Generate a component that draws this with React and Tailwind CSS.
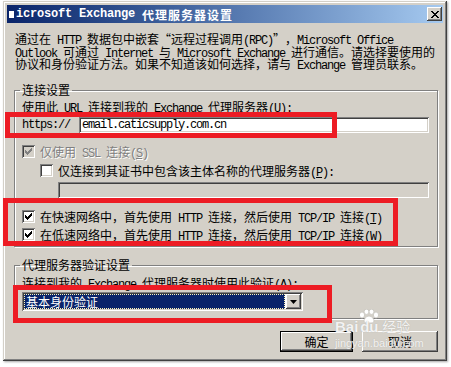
const M = ({ children, className = "", t = "tracking-[-1.2px]" }) => (
  <span className={`font-['Liberation_Mono',monospace] ${t} ${className}`}>{children}</span>
);

const sunken =
  "shadow-[inset_1px_1px_#808080,inset_-1px_-1px_#fff,inset_2px_2px_#404040,inset_-2px_-2px_#D4D0C8]";
const raised =
  "shadow-[inset_-1px_-1px_#404040,inset_1px_1px_#fff,inset_-2px_-2px_#808080,inset_2px_2px_#D4D0C8]";

const Check = ({ checked, disabled }) => (
  <span
    className={`flex h-[13px] w-[13px] shrink-0 items-center justify-center ${
      disabled ? "bg-[#D4D0C8]" : "bg-white"
    } ${sunken}`}
  >
    {checked && (
      <svg width="7" height="7" viewBox="0 0 7 7" shapeRendering="crispEdges" fill={disabled ? "#808080" : "#000"}>
        <rect x="6" y="0" width="1" height="1" />
        <rect x="5" y="1" width="2" height="1" />
        <rect x="0" y="2" width="1" height="1" />
        <rect x="4" y="2" width="3" height="1" />
        <rect x="0" y="3" width="2" height="1" />
        <rect x="3" y="3" width="3" height="1" />
        <rect x="0" y="4" width="5" height="1" />
        <rect x="1" y="5" width="3" height="1" />
        <rect x="2" y="6" width="1" height="1" />
      </svg>
    )}
  </span>
);

const Group = ({ title, children, className = "" }) => (
  <fieldset
    className={`ml-[7px] w-[424px] border border-[#808080] px-[7px] shadow-[inset_1px_1px_#fff,1px_1px_#fff] ${className}`}
  >
    <legend className="ml-[-2px] h-[14px] px-[2px] leading-[14px]">{title}</legend>
    {children}
  </fieldset>
);

const Paw = () => (
  <svg width="22" height="14" viewBox="0 0 22 14" fill="#fff" stroke="#c8c5bf" strokeWidth="0.8">
    <ellipse cx="4" cy="6" rx="2.6" ry="3" />
    <ellipse cx="8.5" cy="2.8" rx="2.4" ry="2.6" />
    <ellipse cx="13.5" cy="2.8" rx="2.4" ry="2.6" />
    <ellipse cx="18" cy="6" rx="2.6" ry="3" />
    <path d="M11 7c-3 0-5 3-5 5s2 2 5 2 5 0 5-2-2-5-5-5z" />
  </svg>
);

export default function App() {
  return (
    <div className="relative h-[367px] w-[451px] overflow-hidden bg-white pl-[3px] pt-[1px] font-['Noto_Sans_CJK_SC',sans-serif] text-[12px] leading-[13px] text-black">
      <div
        className={`relative flex h-[360px] w-[444px] flex-col bg-[#D4D0C8] p-[4px] shadow-[inset_-1px_-1px_#404040,inset_1px_1px_#D4D0C8,inset_-2px_-2px_#808080,inset_2px_2px_#fff,1px_1px_2px_rgba(0,0,0,0.35)]`}
      >
        {/* title bar */}
        <div className="flex h-[18px] shrink-0 items-center bg-linear-to-r from-[#0A246A] to-[#A6CAF0] pl-[2px] font-bold text-white">
          <span className="mr-[2px] inline-block h-[7px] w-[5px] shrink-0 overflow-hidden bg-white text-[1px] leading-[1px] text-white">
            M
          </span>
          <span className="inline-block w-[126px] shrink-0 whitespace-pre font-['Liberation_Mono',monospace] tracking-[-0.2px]">
            icrosoft Exchange
          </span>
          <span className="tracking-[1px]">代理服务器设置</span>
          <button className={`ml-auto mr-[1px] flex h-[14px] w-[15px] items-center justify-center bg-[#D4D0C8] ${raised}`}>
            <svg width="8" height="7" viewBox="0 0 8 7" shapeRendering="crispEdges" fill="#000">
              <rect x="0" y="0" width="2" height="1" />
              <rect x="6" y="0" width="2" height="1" />
              <rect x="1" y="1" width="2" height="1" />
              <rect x="5" y="1" width="2" height="1" />
              <rect x="2" y="2" width="4" height="1" />
              <rect x="3" y="3" width="2" height="1" />
              <rect x="2" y="4" width="4" height="1" />
              <rect x="1" y="5" width="2" height="1" />
              <rect x="5" y="5" width="2" height="1" />
              <rect x="0" y="6" width="2" height="1" />
              <rect x="6" y="6" width="2" height="1" />
            </svg>
          </button>
        </div>

        {/* description */}
        <div className="mt-[10px] h-[37px] whitespace-nowrap pl-[8px] leading-[12px]">
          <div className="h-[12.5px]">
            通过在<M> HTTP </M>数据包中嵌套<span className="inline-block w-[12px] text-right">“</span>远程过程调用<M>(RPC)</M>
            <span className="inline-block w-[12px] text-left">”</span>，<M>Microsoft Office</M>
          </div>
          <div className="h-[12.5px]">
            <M>Outlook </M>可通过<M> Internet </M>与<M> Microsoft Exchange </M>进行通信。请选择要使用的
          </div>
          <div className="h-[12px]">
            协议和身份验证方法。如果不知道该如何选择，请与<M> Exchange </M>管理员联系。
          </div>
        </div>

        {/* connection settings */}
        <Group title="连接设置" className="mt-[13px] pb-[5px]">
          <div className="mt-[3px] h-[13px] whitespace-nowrap">
            使用此<M> URL </M>连接到我的<M> Exchange </M>代理服务器<M>(<span className="underline">U</span>):</M>
          </div>
          <div className="mt-[4px] flex h-[16px] items-center">
            <M className="w-[57px]">https://</M>
            <div className={`flex h-[16px] w-[350px] items-center bg-white pl-[3px] ${sunken}`}>
              <M>email.caticsupply.com.cn</M>
            </div>
          </div>
          <div className="mt-[12px] flex h-[13px] items-center gap-[5px] text-[#808080] [text-shadow:1px_1px_0_#fff]">
            <Check checked disabled />
            <span className="h-[13px]">
              仅使用<M> SSL </M>连接<M>(<span className="underline">S</span>)</M>
            </span>
          </div>
          <div className="mt-[6px] flex h-[13px] items-center gap-[5px] pl-[18px]">
            <Check />
            <span className="h-[13px] whitespace-nowrap">
              仅连接到其证书中包含该主体名称的代理服务器<M>(<span className="underline">P</span>):</M>
            </span>
          </div>
          <div className={`ml-[36px] mt-[5px] h-[16px] w-[371px] bg-[#D4D0C8] ${sunken}`} />
          <div className="mt-[12px] flex h-[13px] items-center gap-[5px]">
            <Check checked />
            <span className="h-[13px] whitespace-nowrap">
              在快速网络中，首先使用<M> HTTP </M>连接，然后使用<M> TCP/IP </M>连接<M>(<span className="underline">T</span>)</M>
            </span>
          </div>
          <div className="mt-[5px] flex h-[13px] items-center gap-[5px]">
            <Check checked />
            <span className="h-[13px] whitespace-nowrap">
              在低速网络中，首先使用<M> HTTP </M>连接，然后使用<M> TCP/IP </M>连接<M>(<span className="underline">W</span>)</M>
            </span>
          </div>
        </Group>

        {/* auth settings */}
        <Group title="代理服务器验证设置" className="mt-[11px] pb-[7px]">
          <div className="mt-[4px] h-[13px] whitespace-nowrap">
            连接到我的<M> Exchange </M>代理服务器时使用此验证<M>(<span className="underline">A</span>):</M>
          </div>
          <div className={`mt-[3px] flex h-[19px] w-[281px] bg-white p-[2px] ${sunken}`}>
            <div className="flex flex-1 items-center border border-dotted border-[#FFF6B8] bg-[#0A246A] pl-[1px] text-white">
              基本身份验证
            </div>
            <div className={`ml-[1px] flex w-[15px] items-center justify-center bg-[#D4D0C8] ${raised}`}>
              <svg width="7" height="4" viewBox="0 0 7 4">
                <path d="M0 0h7L3.5 4z" fill="#000" />
              </svg>
            </div>
          </div>
        </Group>

        {/* buttons */}
        <div className="mt-[12px] flex justify-end gap-[9px] pr-[5px]">
          <button className="h-[21px] w-[73px] border border-black bg-[#D4D0C8]">
            <div className={`flex h-full w-full items-center justify-center ${raised}`}>确定</div>
          </button>
          <button className={`flex h-[21px] w-[76px] items-center justify-center bg-[#D4D0C8] ${raised}`}>
            取消
          </button>
        </div>

        {/* watermark */}
        <div className="pointer-events-none absolute left-[332px] top-[308px] flex flex-col items-start text-white/85 [text-shadow:0_0_1px_#a8a5a0]">
          <div className="flex items-end font-['Liberation_Sans',sans-serif] text-[15px] font-bold leading-[15px]">
            <span>Bai</span>
            <span className="flex flex-col items-center">
              <Paw />
              <span className="-mt-[4px]">du</span>
            </span>
            <span className="ml-[2px] font-['Noto_Sans_CJK_SC',sans-serif] text-[14px] font-normal">经验</span>
          </div>
          <div className="mt-[4px] font-['Liberation_Sans',sans-serif] text-[11px] leading-[11px]">
            jingyan.baidu.com
          </div>
        </div>
      </div>

      {/* red annotation boxes */}
      <div className="pointer-events-none absolute left-[5px] top-[112px] h-[26px] w-[332px] border-[5px] border-[#ED1C24]" />
      <div className="pointer-events-none absolute left-[3px] top-[198px] h-[48px] w-[395px] border-[5px] border-[#ED1C24]" />
      <div className="pointer-events-none absolute left-[13px] top-[285px] h-[38px] w-[319px] border-[5px] border-[#ED1C24]" />
    </div>
  );
}
